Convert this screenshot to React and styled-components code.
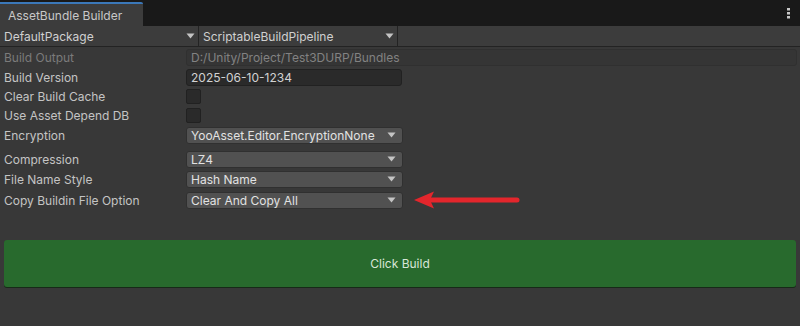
import styled, { createGlobalStyle } from 'styled-components';

const GlobalStyle = createGlobalStyle`
  html, body {
    margin: 0;
    padding: 0;
    background: #383838;
  }
  body {
    font-family: Inter, "Noto Sans", "Liberation Sans", sans-serif;
    font-size: 12px;
    color: #c4c4c4;
  }
`

const Window = styled.div`
  width: 800px;
  height: 326px;
  display: flex;
  flex-direction: column;
  background: #383838;
  overflow: hidden;
`
const TabStrip = styled.div`
  height: 26px;
  background: #191919;
  display: flex;
  align-items: flex-end;
`
const Tab = styled.div`
  width: 135px;
  height: 22px;
  padding-left: 8px;
  background: #3c3c3c;
  border-top: 2px solid #3b78b9;
  border-top-right-radius: 2px;
  display: flex;
  align-items: center;
  color: #c8c8c8;
  font-size: 12px;
`
const Kebab = styled.div`
  margin-left: auto;
  align-self: stretch;
  width: 24px;
  display: flex;
  align-items: center;
  justify-content: center;
`
const Toolbar = styled.div`
  height: 20px;
  background: #3c3c3c;
  border-bottom: 1px solid #232323;
  display: flex;
`
const ToolbarDrop = styled.div`
  width: 191px;
  padding: 0 3px 0 4px;
  border-right: 1px solid #232323;
  display: flex;
  align-items: center;
  justify-content: space-between;
  color: #d0d0d0;
  font-size: 12px;
`
const Form = styled.div`
  display: flex;
  flex-direction: column;
`
const Row = styled.div`
  height: ${props => props.h || 20}px;
  margin-top: ${props => props.gap || 0}px;
  padding-left: 4px;
  display: grid;
  grid-template-columns: 182px 1fr;
  align-items: center;
`
const Label = styled.div`
  color: ${props => props.disabled ? '#7b7b7b' : '#c4c4c4'};
  font-size: 12px;
`
const TextField = styled.div`
  height: 17px;
  width: ${props => props.full ? '611px' : '216px'};
  padding-left: 4px;
  box-sizing: border-box;
  display: flex;
  align-items: center;
  background: ${props => props.disabled ? '#353535' : '#2a2a2a'};
  border: 1px solid ${props => props.disabled ? '#303030' : '#212121'};
  border-radius: 3px;
  color: ${props => props.disabled ? '#828282' : '#d2d2d2'};
  font-size: 12px;
`
const Check = styled.div`
  width: 13px;
  height: 13px;
  background: #2a2a2a;
  border: 1px solid #212121;
  border-radius: 2px;
`
const Select = styled.div`
  height: 17px;
  width: 217px;
  padding: 0 6px 0 4px;
  box-sizing: border-box;
  display: flex;
  align-items: center;
  justify-content: space-between;
  background: #515151;
  border: 1px solid #303030;
  border-radius: 3px;
  color: #e2e2e2;
  font-size: 12px;
`
const SelectCell = styled.div`
  display: flex;
  align-items: center;
  gap: 10px;
`
const BuildButton = styled.div`
  margin: 31px 4px 0;
  height: 47px;
  background: #286a2d;
  border-radius: 3px;
  box-shadow: 0 1px 0 #172a18;
  display: flex;
  align-items: center;
  justify-content: center;
  color: #d8e6d8;
  font-size: 12px;
`

const Caret = () => (
  <svg width="9" height="6" viewBox="0 0 9 6">
    <path d="M0.5 0.5 L8.5 0.5 L4.5 5.5 Z" fill="#c4c4c4" />
  </svg>
)

const RedArrow = () => (
  <svg width="110" height="22" viewBox="0 0 110 22">
    <line x1="16" y1="11" x2="104" y2="11" stroke="#e3262c" strokeWidth="5" strokeLinecap="round" />
    <path d="M1 11 L21 2.5 L17 11 L21 19.5 Z" fill="#e3262c" />
  </svg>
)

const DropRow = ({ label, value, gap, arrow }) => (
  <Row gap={gap}>
    <Label>{label}</Label>
    <SelectCell>
      <Select>
        <span>{value}</span>
        <Caret />
      </Select>
      {arrow && <RedArrow />}
    </SelectCell>
  </Row>
)

export default function App() {
  return (
    <Window>
      <GlobalStyle />
      <TabStrip>
        <Tab>AssetBundle Builder</Tab>
        <Kebab>
          <svg width="3" height="11" viewBox="0 0 3 11">
            <rect x="0" y="0" width="3" height="2.5" fill="#c8c8c8" />
            <rect x="0" y="4" width="3" height="2.5" fill="#c8c8c8" />
            <rect x="0" y="8" width="3" height="2.5" fill="#c8c8c8" />
          </svg>
        </Kebab>
      </TabStrip>
      <Toolbar>
        <ToolbarDrop>
          <span>DefaultPackage</span>
          <Caret />
        </ToolbarDrop>
        <ToolbarDrop>
          <span>ScriptableBuildPipeline</span>
          <Caret />
        </ToolbarDrop>
      </Toolbar>
      <Form>
        <Row>
          <Label disabled>Build Output</Label>
          <TextField disabled full>D:/Unity/Project/Test3DURP/Bundles</TextField>
        </Row>
        <Row>
          <Label>Build Version</Label>
          <TextField>2025-06-10-1234</TextField>
        </Row>
        <Row h={19}>
          <Label>Clear Build Cache</Label>
          <Check />
        </Row>
        <Row h={19}>
          <Label>Use Asset Depend DB</Label>
          <Check />
        </Row>
        <DropRow label="Encryption" value="YooAsset.Editor.EncryptionNone" />
        <DropRow label="Compression" value="LZ4" gap={4} />
        <DropRow label="File Name Style" value="Hash Name" />
        <DropRow label="Copy Buildin File Option" value="Clear And Copy All" arrow />
      </Form>
      <BuildButton>Click Build</BuildButton>
    </Window>
  )
}
